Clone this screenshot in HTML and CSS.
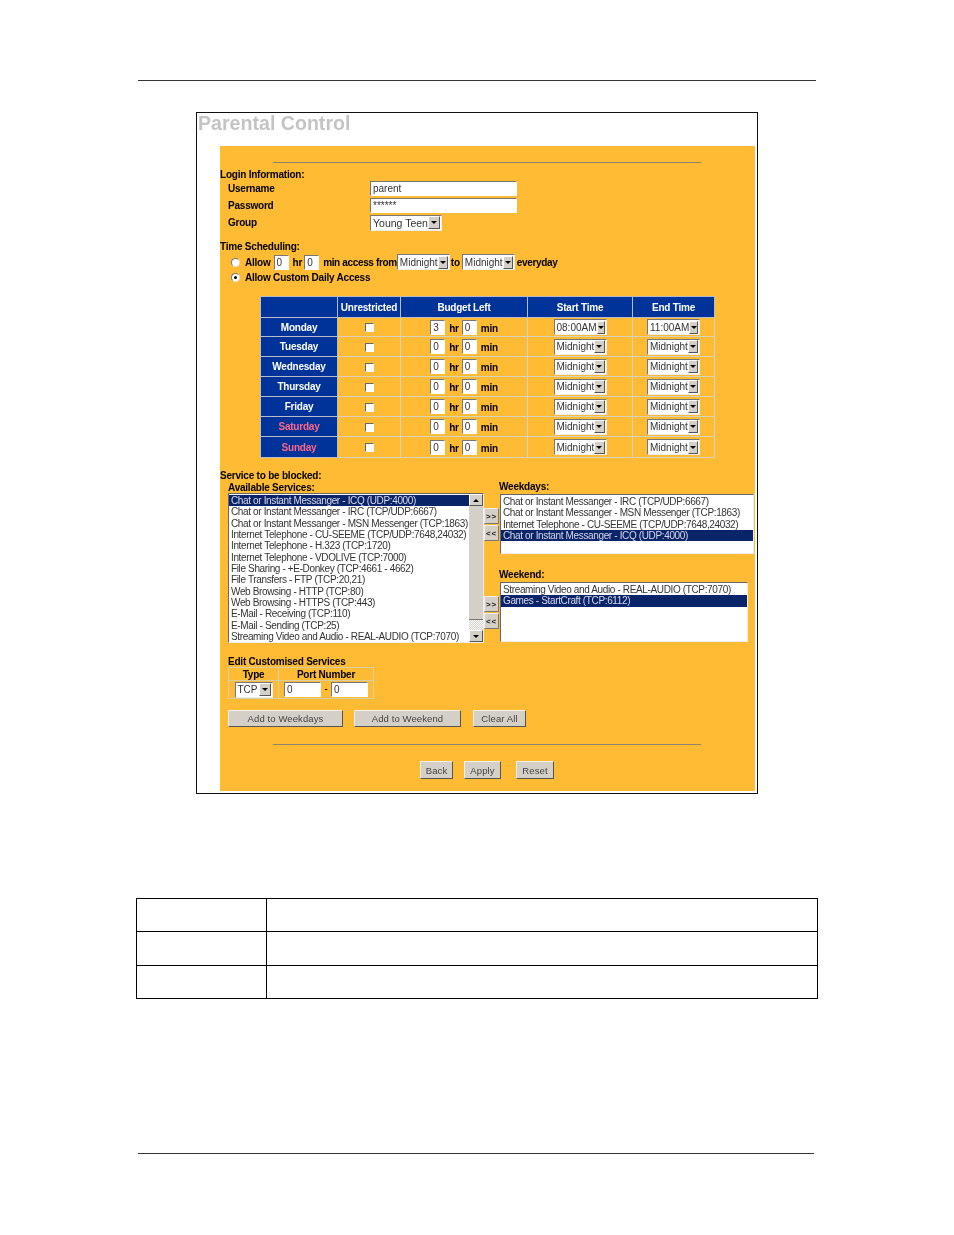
FILE: index.html
```html
<!DOCTYPE html>
<html lang="en">
<head>
  <meta charset="UTF-8">
  <title>Parental Control</title>
  <link rel="stylesheet" href="styles.css">
</head>
<body>
  <div class="top-rule"></div>
  <div class="figure">
    <h1>Parental Control</h1>
    <form class="panel">
      <div class="rule"></div>
      <div class="label first">Login Information:</div>
      <div class="field"><span class="field-name">Username</span><input class="wide" type="text" value="parent"></div>
      <div class="field"><span class="field-name">Password</span><input class="wide" type="text" value="******"></div>
      <div class="field"><span class="field-name">Group</span><span class="sel group-sel">Young Teen<i class="arrow"></i></span></div>

      <div class="label time-label">Time Scheduling:</div>
      <div class="allow-row">
        <i class="radio"></i><b class="allow">Allow</b><input class="num" type="text" value="0"><b class="hr1">hr</b><input class="num" type="text" value="0"><b class="from">min access from</b><span class="sel">Midnight<i class="arrow"></i></span><b class="to">to</b><span class="sel">Midnight<i class="arrow"></i></span><b class="every">everyday</b>
      </div>
      <div class="allow-row custom"><i class="radio on"></i><b class="allow">Allow Custom Daily Access</b></div>

      <table class="schedule">
        <tr class="head"><th class="c-day"></th><th class="c-un">Unrestricted</th><th class="c-bud">Budget Left</th><th class="c-st">Start Time</th><th class="c-en">End Time</th></tr>
        <tr class="short"><th>Monday</th><td><i class="check"></i></td><td class="budget"><input class="num" type="text" value="3"><b>hr</b><input class="num" type="text" value="0"><b>min</b></td><td><span class="sel">08:00AM<i class="arrow"></i></span></td><td><span class="sel">11:00AM<i class="arrow"></i></span></td></tr>
        <tr><th>Tuesday</th><td><i class="check"></i></td><td class="budget"><input class="num" type="text" value="0"><b>hr</b><input class="num" type="text" value="0"><b>min</b></td><td><span class="sel">Midnight<i class="arrow"></i></span></td><td><span class="sel">Midnight<i class="arrow"></i></span></td></tr>
        <tr><th>Wednesday</th><td><i class="check"></i></td><td class="budget"><input class="num" type="text" value="0"><b>hr</b><input class="num" type="text" value="0"><b>min</b></td><td><span class="sel">Midnight<i class="arrow"></i></span></td><td><span class="sel">Midnight<i class="arrow"></i></span></td></tr>
        <tr><th>Thursday</th><td><i class="check"></i></td><td class="budget"><input class="num" type="text" value="0"><b>hr</b><input class="num" type="text" value="0"><b>min</b></td><td><span class="sel">Midnight<i class="arrow"></i></span></td><td><span class="sel">Midnight<i class="arrow"></i></span></td></tr>
        <tr><th>Friday</th><td><i class="check"></i></td><td class="budget"><input class="num" type="text" value="0"><b>hr</b><input class="num" type="text" value="0"><b>min</b></td><td><span class="sel">Midnight<i class="arrow"></i></span></td><td><span class="sel">Midnight<i class="arrow"></i></span></td></tr>
        <tr><th class="weekend">Saturday</th><td><i class="check"></i></td><td class="budget"><input class="num" type="text" value="0"><b>hr</b><input class="num" type="text" value="0"><b>min</b></td><td><span class="sel">Midnight<i class="arrow"></i></span></td><td><span class="sel">Midnight<i class="arrow"></i></span></td></tr>
        <tr class="tall"><th class="weekend">Sunday</th><td><i class="check"></i></td><td class="budget"><input class="num" type="text" value="0"><b>hr</b><input class="num" type="text" value="0"><b>min</b></td><td><span class="sel">Midnight<i class="arrow"></i></span></td><td><span class="sel">Midnight<i class="arrow"></i></span></td></tr>
      </table>

      <div class="label service-label">Service to be blocked:</div>
      <div class="services">
        <div class="available">
          <div class="label avail-label">Available Services:</div>
          <div class="listbox avail-box">
            <div class="options">
              <div class="opt selected">Chat or Instant Messanger - ICQ (UDP:4000)</div>
              <div class="opt">Chat or Instant Messanger - IRC (TCP/UDP:6667)</div>
              <div class="opt">Chat or Instant Messanger - MSN Messenger (TCP:1863)</div>
              <div class="opt">Internet Telephone - CU-SEEME (TCP/UDP:7648,24032)</div>
              <div class="opt">Internet Telephone - H.323 (TCP:1720)</div>
              <div class="opt">Internet Telephone - VDOLIVE (TCP:7000)</div>
              <div class="opt">File Sharing - +E-Donkey (TCP:4661 - 4662)</div>
              <div class="opt">File Transfers - FTP (TCP:20,21)</div>
              <div class="opt">Web Browsing - HTTP (TCP:80)</div>
              <div class="opt">Web Browsing - HTTPS (TCP:443)</div>
              <div class="opt">E-Mail - Receiving (TCP:110)</div>
              <div class="opt">E-Mail - Sending (TCP:25)</div>
              <div class="opt">Streaming Video and Audio - REAL-AUDIO (TCP:7070)</div>
            </div>
            <div class="scrollbar">
              <i class="scroll-btn up"></i>
              <i class="thumb"></i>
              <i class="track"></i>
              <i class="scroll-btn"></i>
            </div>
          </div>
        </div>
        <div class="chosen">
          <div class="label chosen-label">Weekdays:</div>
          <div class="picker">
            <div class="movers"><span class="mover">&gt;&gt;</span><span class="mover">&lt;&lt;</span></div>
            <div class="listbox weekdays-box">
              <div class="opt">Chat or Instant Messanger - IRC (TCP/UDP:6667)</div>
              <div class="opt">Chat or Instant Messanger - MSN Messenger (TCP:1863)</div>
              <div class="opt">Internet Telephone - CU-SEEME (TCP/UDP:7648,24032)</div>
              <div class="opt selected">Chat or Instant Messanger - ICQ (UDP:4000)</div>
            </div>
          </div>
          <div class="label chosen-label weekend-label">Weekend:</div>
          <div class="picker">
            <div class="movers"><span class="mover">&gt;&gt;</span><span class="mover">&lt;&lt;</span></div>
            <div class="listbox weekend-box">
              <div class="opt">Streaming Video and Audio - REAL-AUDIO (TCP:7070)</div>
              <div class="opt selected">Games - StartCraft (TCP:6112)</div>
            </div>
          </div>
        </div>
      </div>

      <div class="label edit-label">Edit Customised Services</div>
      <table class="ports">
        <tr class="ports-head"><th class="p-type">Type</th><th class="p-num">Port Number</th></tr>
        <tr><td><span class="sel tcp-sel">TCP<i class="arrow"></i></span></td><td class="port-cell"><input class="port" type="text" value="0"><span class="dash">-</span><input class="port" type="text" value="0"></td></tr>
      </table>

      <div class="actions">
        <span class="btn add-days">Add to Weekdays</span>
        <span class="btn add-end">Add to Weekend</span>
        <span class="btn clear">Clear All</span>
      </div>
      <div class="rule low"></div>
      <div class="bottom-btns">
        <span class="btn back">Back</span>
        <span class="btn apply">Apply</span>
        <span class="btn reset">Reset</span>
      </div>
    </form>
  </div>

  <table class="doc-table">
    <tr><td class="doc-first"></td><td></td></tr>
    <tr><td></td><td></td></tr>
    <tr><td></td><td></td></tr>
  </table>
  <div class="bottom-rule"></div>
</body>
</html>
```

FILE: styles.css
```css
:root{--panel:#ffbb33;--blue:#003399;--sel:#0a246a;--face:#d4d0c8;--dark:#6f6f6f}
*{box-sizing:border-box}
html,body{margin:0;background:#fff}
body{height:1235px;padding-top:80px;font-family:'Liberation Sans',Arial,sans-serif;color:#000;overflow:hidden}
.top-rule{width:678px;height:1px;margin-left:138px;background:#333}
.bottom-rule{width:676px;height:1px;margin:154px 0 0 138px;background:#333}

.figure{width:562px;height:682px;margin:31px 0 0 196px;border:1px solid #111;filter:blur(.45px)}
.figure h1{margin:0;height:33px;padding-left:1px;font-size:19.6px;line-height:20px;font-weight:bold;color:#c4c4c4}
.panel{width:535px;height:645px;margin-left:23px;background:var(--panel);padding-top:16px;font-size:10px;letter-spacing:-.22px}
.rule{width:428px;height:1px;margin-left:53px;background:#8d8470}
.rule.low{margin-top:17px}
.label{height:12px;line-height:12px;font-weight:bold;white-space:nowrap}
.label.first{margin-top:6px;height:11px}
.time-label{margin-top:10px;height:11px}
.service-label{margin-top:12px;height:11px}
.avail-label{padding-top:1px}
.edit-label{margin:13px 0 0 8px;height:11px}

input{font-family:inherit;font-size:10px;letter-spacing:0;color:#333;padding:0 0 0 2px;margin:0;background:#fff;border:1px solid #fff;border-top-color:#777;border-left-color:#777;outline:none}
.field{display:flex;align-items:center;height:17px;padding-left:8px}
.field-name{width:142px;font-weight:bold}
.wide{width:147px;height:15px}
.num{width:15px;height:15px}

.sel{display:inline-flex;align-items:center;justify-content:space-between;width:53px;height:16px;padding:0 1px 0 2px;background:#fff;border:1px solid #eee;border-top-color:#777;border-left-color:#777;font-size:10px;letter-spacing:0;color:#333;vertical-align:middle}
.group-sel{width:72px;font-size:10.5px}
.tcp-sel{width:38px}
.arrow{display:flex;align-items:center;justify-content:center;width:12px;height:13px;background:var(--face);border:1px solid #fff;border-right-color:#555;border-bottom-color:#555}
.arrow::after{content:"";border:3px solid transparent;border-top:3px solid #000;border-bottom:0}

.allow-row{display:flex;align-items:center;height:16px;margin-top:2px;padding-left:11px}
.allow-row.custom{height:15px;margin-top:0}
.radio{width:9px;height:9px;border-radius:50%;background:#fff;border:1px solid #777;border-right-color:#ddd;border-bottom-color:#ddd;display:flex;align-items:center;justify-content:center}
.radio.on::after{content:"";width:3px;height:3px;border-radius:50%;background:#000}
.allow{margin:0 3px 0 5px;white-space:nowrap}
.hr1{margin:0 2px 0 4px}
.from{margin:0 0 0 4px;letter-spacing:-.35px;white-space:nowrap}
.to{margin:0 2px 0 1px}
.every{margin-left:2px;letter-spacing:-.35px}

.schedule{border-collapse:collapse;table-layout:fixed;width:454px;height:162px;margin:11px 0 0 40px}
.schedule th,.schedule td{border:1px solid #d8d2c0;padding:0;text-align:center;vertical-align:middle}
.schedule tr{height:20px}
.schedule .head{height:21px}
.schedule .short{height:19px}
.schedule .tall{height:21px}
.schedule th{background:var(--blue);color:#fff;font-weight:bold;border-color:#b8bcc8}
.schedule th.weekend{color:#ff6688}
.c-day{width:77px}
.c-un{width:63px}
.c-bud{width:127px}
.c-st{width:105px}
.c-en{width:82px}
.check{display:inline-block;width:9px;height:9px;background:#fff;border:1px solid #fff;border-top-color:#666;border-left-color:#666;vertical-align:middle}
.schedule .budget{padding-left:3px}
.budget b{margin:2px 3px 0 4px;display:inline-block;vertical-align:middle}
.budget input{vertical-align:middle}

.services{display:flex;height:162px}
.available{width:264px;padding-left:8px}
.chosen{width:271px}
.chosen-label{margin-left:15px}
.weekend-label{margin-top:15px}
.listbox{background:#fff;border:1px solid #eee;border-top-color:#666;border-left-color:#666;font-size:10px;letter-spacing:-.36px;color:#333;overflow:hidden}
.opt{height:11.35px;line-height:11.35px;padding-left:2px;white-space:nowrap}
.opt.selected{background:var(--sel);color:#d8d8e8}
.avail-box{display:flex;width:256px;height:150px}
.options{flex:1;padding-top:1px;min-width:0}
.scrollbar{display:flex;flex-direction:column;width:14px;background:var(--face)}
.scroll-btn{display:flex;align-items:center;justify-content:center;height:12px;background:var(--face);border:1px solid #fff;border-right-color:#555;border-bottom-color:#555}
.scroll-btn::after{content:"";border:3px solid transparent;border-top:3px solid #000;border-bottom:0}
.scroll-btn.up::after{border-top:0;border-bottom:3px solid #000}
.thumb{flex:1;background:var(--face);border-bottom:1px solid #777}
.track{height:10px;background:repeating-conic-gradient(#fff 0 25%,var(--face) 0 50%) 0 0/2px 2px}
.picker{display:flex;margin-top:1px}
.movers{display:flex;flex-direction:column;gap:1px;width:16px;padding-top:14px}
.mover{display:flex;align-items:center;justify-content:center;width:15px;height:16px;background:var(--face);border:1px solid #eee;border-right-color:#777;border-bottom-color:#777;font-size:8px;font-weight:bold;letter-spacing:.8px;color:#222}
.weekdays-box{width:254px;height:60px;padding-top:1px}
.weekend-box{width:248px;height:60px;padding-top:1px}

.ports{border-collapse:collapse;table-layout:fixed;width:146px;height:32px;margin-left:8px}
.ports th,.ports td{border:1px solid #d8cfa8;padding:0;text-align:center}
.ports-head{height:13px;line-height:11px}
.p-type{width:50px}
.port-cell{white-space:nowrap}
.port{width:37px;height:15px;vertical-align:middle}
.dash{display:inline-block;width:10px;text-align:center}

.btn{display:flex;align-items:center;justify-content:center;background:var(--face);border:1px solid #f4f1e8;border-right-color:#555;border-bottom-color:#555;color:#444;font-size:9.5px;letter-spacing:.1px;white-space:nowrap}
.actions{display:flex;height:17px;margin:11px 0 0 8px}
.add-days{width:115px}
.add-end{width:107px;margin-left:11px}
.clear{width:53px;margin-left:12px}
.bottom-btns{display:flex;height:18px;margin:16px 0 0 200px}
.back{width:33px}
.apply{width:37px;margin-left:11px}
.reset{width:38px;margin-left:15px}

.doc-table{border-collapse:collapse;table-layout:fixed;width:682px;height:101px;margin:104px 0 0 136px}
.doc-table td{border:1px solid #000;padding:0}
.doc-first{width:130px}
```
